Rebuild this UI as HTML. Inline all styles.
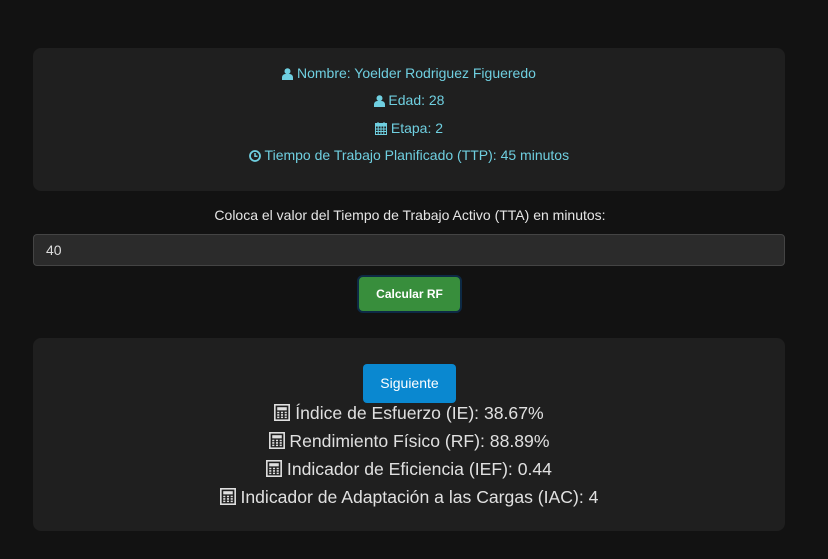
<!DOCTYPE html>
<html><head><meta charset="utf-8"><style>
body{margin:0;background:#121212;width:828px;height:559px;font-family:"Liberation Sans",sans-serif;position:relative;overflow:hidden}
.card{position:absolute;left:33px;width:752px;background:#1f1f1f;border-radius:8px}
.info{top:48px;height:143px;color:#6fcfe0;font-size:14px;text-align:center}
.info div{position:absolute;left:0;right:0;height:20px;line-height:20px}
.lbl{position:absolute;top:207px;left:0;right:8px;text-align:center;color:#e6e6e6;font-size:14px}
.inp{position:absolute;left:33px;top:234px;width:750px;height:30px;background:#2b2b2b;border:1px solid #444;border-radius:4px;color:#ddd;font-size:14px;line-height:30px;box-sizing:content-box}
.inp span{padding-left:12px}
.btn{position:absolute;left:357px;top:275px;width:101px;height:34px;background:#388e3c;border:2px solid #0d2a45;border-radius:6px;color:#fff;font-weight:bold;font-size:12px;text-align:center;line-height:34px}
.res{top:338px;height:193px;color:#e0e0e0;font-size:17.6px;text-align:center}
.sig{position:absolute;left:330px;top:26px;width:93px;height:39px;background:#0a88d0;border-radius:4px;color:#fff;font-size:14px;line-height:39px}
.res .r{position:absolute;left:0;right:0;height:28px;line-height:28px}
svg{vertical-align:-2px}
</style></head><body>
<div class="card info">
<div style="top:15px"><svg width="11" height="12" viewBox="0 0 11 12"><circle cx="5.5" cy="3.2" r="3" fill="#6fcfe0"/><path d="M0 12v-2.5c0-2 1.5-3.5 3.5-3.5h4c2 0 3.5 1.5 3.5 3.5V12z" fill="#6fcfe0"/></svg> Nombre: Yoelder Rodriguez Figueredo</div>
<div style="top:42px"><svg width="11" height="12" viewBox="0 0 11 12"><circle cx="5.5" cy="3.2" r="3" fill="#6fcfe0"/><path d="M0 12v-2.5c0-2 1.5-3.5 3.5-3.5h4c2 0 3.5 1.5 3.5 3.5V12z" fill="#6fcfe0"/></svg> Edad: 28</div>
<div style="top:70px"><svg width="12" height="13" viewBox="0 0 12 13"><rect x="0.5" y="1.5" width="11" height="11" fill="none" stroke="#6fcfe0"/><rect x="0.5" y="1.5" width="11" height="3" fill="#6fcfe0"/><path d="M3 0v3M9 0v3M0.5 7h11M0.5 9.5h11M3.2 4.5v8M6 4.5v8M8.8 4.5v8" stroke="#6fcfe0" stroke-width="1"/></svg> Etapa: 2</div>
<div style="top:97px"><svg width="12" height="12" viewBox="0 0 12 12"><circle cx="6" cy="6" r="5" fill="none" stroke="#6fcfe0" stroke-width="1.8"/><path d="M6 3v3.3h2.5" fill="none" stroke="#6fcfe0" stroke-width="1.5"/></svg> Tiempo de Trabajo Planificado (TTP): 45 minutos</div>
</div>
<div class="lbl">Coloca el valor del Tiempo de Trabajo Activo (TTA) en minutos:</div>
<div class="inp"><span>40</span></div>
<div class="btn">Calcular RF</div>
<div class="card res">
<div class="sig">Siguiente</div>
<div class="r" style="top:61px"><svg width="16" height="17" viewBox="0 0 15 16"><rect x="0.75" y="0.75" width="13.5" height="14.5" fill="none" stroke="#e0e0e0" stroke-width="1.5"/><rect x="3" y="3" width="9" height="3" fill="#e0e0e0"/><path d="M3 8h2M6.5 8h2M10 8h2M3 10.3h2M6.5 10.3h2M10 10.3h2M3 12.6h2M6.5 12.6h2M10 12.6h2" stroke="#e0e0e0" stroke-width="1.5"/></svg> Índice de Esfuerzo (IE): 38.67%</div>
<div class="r" style="top:89px"><svg width="16" height="17" viewBox="0 0 15 16"><rect x="0.75" y="0.75" width="13.5" height="14.5" fill="none" stroke="#e0e0e0" stroke-width="1.5"/><rect x="3" y="3" width="9" height="3" fill="#e0e0e0"/><path d="M3 8h2M6.5 8h2M10 8h2M3 10.3h2M6.5 10.3h2M10 10.3h2M3 12.6h2M6.5 12.6h2M10 12.6h2" stroke="#e0e0e0" stroke-width="1.5"/></svg> Rendimiento Físico (RF): 88.89%</div>
<div class="r" style="top:117px"><svg width="16" height="17" viewBox="0 0 15 16"><rect x="0.75" y="0.75" width="13.5" height="14.5" fill="none" stroke="#e0e0e0" stroke-width="1.5"/><rect x="3" y="3" width="9" height="3" fill="#e0e0e0"/><path d="M3 8h2M6.5 8h2M10 8h2M3 10.3h2M6.5 10.3h2M10 10.3h2M3 12.6h2M6.5 12.6h2M10 12.6h2" stroke="#e0e0e0" stroke-width="1.5"/></svg> Indicador de Eficiencia (IEF): 0.44</div>
<div class="r" style="top:145px"><svg width="16" height="17" viewBox="0 0 15 16"><rect x="0.75" y="0.75" width="13.5" height="14.5" fill="none" stroke="#e0e0e0" stroke-width="1.5"/><rect x="3" y="3" width="9" height="3" fill="#e0e0e0"/><path d="M3 8h2M6.5 8h2M10 8h2M3 10.3h2M6.5 10.3h2M10 10.3h2M3 12.6h2M6.5 12.6h2M10 12.6h2" stroke="#e0e0e0" stroke-width="1.5"/></svg> Indicador de Adaptación a las Cargas (IAC): 4</div>
</div>
</body></html>
